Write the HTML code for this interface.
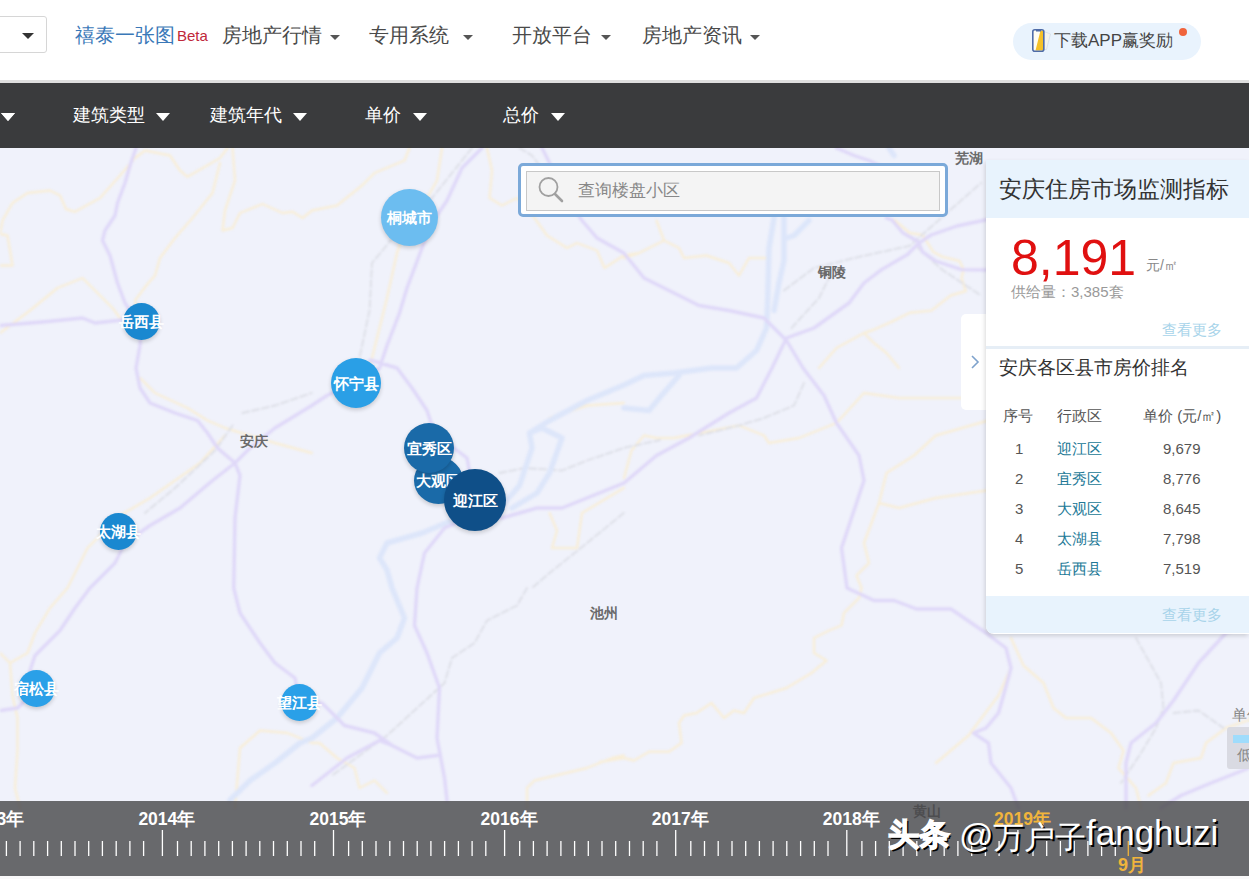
<!DOCTYPE html>
<html><head><meta charset="utf-8">
<style>
*{margin:0;padding:0;box-sizing:border-box}
html,body{width:1249px;height:879px;overflow:hidden;background:#f0f2fb;font-family:"Liberation Sans",sans-serif;position:relative}
.abs{position:absolute}
#header{position:absolute;left:0;top:0;width:1249px;height:83px;background:#fff;border-bottom:3px solid #dedede}
#map{position:absolute;left:0;top:83px;width:1249px;height:796px;background:#f0f2fb}
#bar{position:absolute;left:0;top:83px;width:1249px;height:65px;background:rgba(38,39,40,0.9)}
.nav{position:absolute;top:22px;font-size:20px;color:#4a4a4a;line-height:26px;white-space:nowrap}
.caret{position:absolute;width:0;height:0;border-left:5.5px solid transparent;border-right:5.5px solid transparent;border-top:5px solid #555}
.fbar{position:absolute;top:102px;font-size:18px;color:#fff;line-height:26px;white-space:nowrap}
.wcaret{position:absolute;top:113px;width:0;height:0;border-left:7px solid transparent;border-right:7px solid transparent;border-top:8px solid #fff}
.bub{position:absolute;border-radius:50%;box-shadow:0 2px 4px rgba(0,0,0,0.18);color:#fff;font-size:15px;font-weight:bold;line-height:15px;text-align:center;white-space:nowrap;display:flex;align-items:center;justify-content:center}
.lbl{position:absolute;font-family:"Liberation Serif",serif;font-size:14px;color:#666;white-space:nowrap;font-weight:bold}
#panel{position:absolute;left:986px;top:160px;width:263px;height:474px;background:#fff;border-bottom-left-radius:8px;box-shadow:-1px 2px 4px rgba(0,0,0,0.15);overflow:hidden}
#timeline{position:absolute;left:0;top:801px;width:1249px;height:75px;background:rgba(70,70,73,0.8)}
#bstrip{position:absolute;left:0;top:876px;width:1249px;height:3px;background:#f9f9fa}
.tk{position:absolute;width:1.5px;background:#fff}
.yr{position:absolute;top:8px;font-size:17.5px;font-weight:bold;color:#fff;line-height:20px;white-space:nowrap}
.wm{position:absolute;color:#fff;white-space:nowrap;line-height:36px;text-shadow:2px 2px 0 #000}
</style></head><body>
<div id="map"><!--ROADS--><svg width="1249" height="796" viewBox="0 83 1249 796" style="position:absolute;left:0;top:0;filter:blur(0.8px)" fill="none" stroke-linejoin="round" stroke-linecap="round">
<path d="M0,234 L2.5,220.5 L12.5,203 L27.5,193 L50,190.5 L60,195.5 L66,209 L75,211.8 L100,198 L120,175.5 L135,158 L145,150.5 L170,155.5 L180,170.5 L187.5,176.8 L205,166.8 L220,158 L227.5,148 M0,234 L7.5,235.5 L12.5,265.5 L0,265.5 M232.5,148 L235,180.5 L225,210.5 L222.5,230.5 L232.5,228 L240,213 L262.5,204 L282.5,213 L292.5,211.8 L302.5,218 L312,210.5 L337,205.5 L362,185.5 L374.5,173 L404.5,160.5 L409.5,148 M220,163 L212.5,193 L192.5,218 L175,238 L160,258 L155,275.5 L147.5,284 L135,300.5 L141,321 M0,333 L30,310.5 L57.5,288 L82.5,278 L97.5,293 L112.5,308 L120,318 M442,148 L437,180.5 L417,215.5 L409,217 L397,253 L387,298 L374.5,348 L369.5,368 M487,148 L492,170.5 L489.5,198 L502,205.5 L517,198 L534.5,218 L547,235.5 L567,248 L577,243 L597,250.5 L604.5,268 L623.75,255.5 L639,253 L664,240.5 L656.5,220.5 M624,258 L639,253 M664,240.5 L679,248 L684,258 L706.5,255.5 L729,263 L739,275.5 L749,258 L766.5,258 M819,368 L836.5,348 L864,333 L873,330 L892.4,321.4 L909.7,312.8 L931.3,310.6 L950.7,295.5 L965.8,291 L961.5,278 L963.7,269.6 L959.4,261 L942,256.6 L933.4,252 L922.6,235 L909.7,233 L894.5,220 M864,333 L874,343 L886.5,353 L899,368 M140,378 L155,393 L187.5,408 L207.5,420.5 L225,428 L275,443 L311.75,453 M225,435.5 L200,463 L150,498 L120,515.5 L87.5,548 L67.5,588 L50,608 L35,633 L27.5,653 L10,663 M0,653 L10,663 L12.5,695.5 L17.5,718 L17.5,750.5 L15,788 L20,808 M624,478 L631.5,450.5 L644,435.5 L656.5,438 L674,438 L739,425.5 L764,435.5 L769,443 L799,438 L836.5,423 L864,393 L899,398 L935.75,398 L990,398 M990,420 L935.75,435.5 L914,455.5 L886.5,473 L879,503 L864,543 L869,563 L856.5,575.5 L861.5,588 L859,598 L844,613 L841.5,625.5 L829,630.5 L814,638 L814,653 L826.5,660.5 L811.5,673 L786.5,688 L754,698 L744,713 L734,710.5 L724,718 L711.5,703 L696.5,713 L684,715.5 L679,723 L681.5,743 L669,751.75 L649,751.75 L634,760.5 L624,758 L600,762 M879,503 L899,508 L935.75,498 L990,490 M1011,638 L1023.5,665.5 L1043.5,683 L1053.5,708 L1066,718 L1091,718 L1111,733 L1123.5,750.5 L1118.5,768 L1136,788 L1141,808 M1249,720 L1226,728 L1206,743 L1201,758 L1173.5,763 L1166,783 L1148.5,795.5 M936,763 L968.5,735.5 L998.5,695.5 L1010,670 M235,808 L240,748 L260,730.5 L287.5,733 L312,743 L319.5,743 L337,758 L354.5,768 L359.5,788 L374.5,780.5 L387,793 M527,808 L527,788 L534.5,780.5 L587,768 L612,758 L623.75,755.5 M623.75,403 L587,405.5 L549.5,418 M549.5,513 L557,530.5 L552,548 L577,548 L582,513 L623.75,488" stroke="#f8eed8" stroke-width="2.4"/>
<path d="M472,148 L452,173 L432,198 L409,217 L384.5,248 L372,263 L369.5,310.5 L359.5,358 M519.5,148 L532,155.5 L539.5,165.5 M242.5,413 L275,405.5 L311.75,393 M232.5,425.5 L215,450.5 L175,488 L145,513 M499.5,473 L524.5,468 L562,470.5 L587,460.5 L623.75,448 L660,440 M784,290.5 L814,268 L860,256.6 L909.7,245.8 L946.4,213.4 L981,183 M918,248 L942,269.6 L981,295.5 M791.5,328 L819,298 L829,278 M804,383 L794,405.5 L764,418 L739,425.5 L699,435.5 M527,588 L517,605.5 L487,620.5 L474.5,643 L452,658 L444.5,683 L387,735.5 L332,775.5 M1136,638 L1161,683 L1163.5,708 L1156,728 L1141,753 L1121,783 M1173.5,713 L1198.5,710.5 L1223.5,728 M623.75,513 L587,543 L549.5,573 L532,588" stroke="#dcdee6" stroke-width="1.8" stroke-dasharray="7 3"/>
<path d="M230,800 L250,780.5 L275,763 L300,743 L312,738 L337,718 L362,688 L379.5,653 L397,638 L404.5,618 L392,588 L387,570 L379.5,558 L387,543 L422,533 L452,520.5 L475,515 L502,505.5 L519.5,485.5 L532,448 L529.5,433 L549.5,420.5 L587,400.5 L624,385 L644,375.5 L674,373 L711.5,368 L736.5,368 L756.5,350.5 L766.5,328 L767.75,298 L769,248 L774,218 M784,218 L784,260.5 L779,283 L774,310.5 M809,220.5 L794,235.5 L786.5,238 M529.5,433 L542,428 L562,438 L549.5,473 L537,493 L512,508 M624,408 L649,410.5 L661.5,395.5 L679,375.5 M889,148 L894,155.5" stroke="#dde6fa" stroke-width="5.5"/>
<path d="M136,148 L130,165.5 L125,183 L117.5,203 L115,215.5 L105,230.5 L102.5,240.5 L110,255.5 L117.5,283 L125,303 L135,318 L141,330 L140,345.5 L136,368 L140,388 L150,403 L175,413 L197.5,420.5 L207.5,433 L217.5,448 L235,463 L240,475.5 L235,518 L233.75,588 L240,613 L260,643 L275,663 L295,678 L300,703 L322,703 L344.5,725.5 L374.5,733 L392,745.5 L417,758 L437,755.5 M0,325.5 L45,321.8 L82.5,318 L95,323 L117.5,320.5 L135,318 M482,148 L462,168 L447,200.5 L432,223 L422,248 L407,288 L399.5,313 L387,345.5 L379.5,368 L360,382 M370,360 L397,368 L412,388 L427,410.5 L432,425.5 L450,445 L467,458 L475,500 M0,710.5 L17.5,708 L36,689 L30,670.5 L35,655.5 L60,630.5 L75,608 L90,588 L115,563 L125,543 L150,525.5 L180,508 L212.5,480.5 L235,463 L250,448 L275,428 L311.75,405.5 L327,395.5 L355,382 M542,148 L549.5,163 L565,195 L582,220.5 L597,238 L623.75,253 L644,278 L674,293 L699,305.5 L729,310.5 L764,318 L786.5,340.5 L803,368 L824,395.5 L836.5,423 L859,455.5 L864,480.5 L851.5,518 L841.5,548 L847,588 L874,600.5 L894,600.5 L916.5,609 L936,609 L951,609 L986,633 L1006,648 L1011,668 L1003.5,695.5 L998.5,713 L986,728 L973.5,733 L988.5,743 L991,763 L1011,788 L1018.5,808 M447,800.5 L444.5,778 L437,738 L439.5,688 L427,653 L414.5,625.5 L417,588 L424.5,553 L444.5,528 L475,515 L502,518 L537,508 L562,508 L587,498 L624,483 L656.5,455.5 L689,438 L729,413 L756.5,398 L772,368 L786.5,338 L814,328 L849,303 L864,283 L881.6,269.6 L907.5,254.5 L918,243.7 L931,235 L957,226 L990,219 M312,785.5 L347,758 L379.5,740.5 L392,745.5 M836.5,148 L854,155.5 L869,160.5 L900,175 M886.5,218 L892,220 L903,233 L918,241.5 L922.6,252 L935.6,261 L961.5,269.6 L990,270 M1249,625 L1226,633 L1198.5,663 L1173.5,700.5 L1156,723 L1131,743 L1126,763 L1126,808 M1249,768 L1211,783 L1181,795.5 L1161,808" stroke="#dfd8f8" stroke-width="3.4"/>
</svg>
<svg width="1249" height="796" viewBox="0 83 1249 796" style="position:absolute;left:0;top:0">
<text x="240" y="446" font-family="Liberation Serif" font-size="14" font-weight="bold" fill="#6a6a6a">安庆</text>
<text x="818" y="277" font-family="Liberation Serif" font-size="14" font-weight="bold" fill="#6a6a6a">铜陵</text>
<text x="589.5" y="618" font-family="Liberation Serif" font-size="14" font-weight="bold" fill="#6a6a6a">池州</text>
<text x="955" y="163" font-family="Liberation Serif" font-size="14" font-weight="bold" fill="#6a6a6a">芜湖</text>
<text x="913" y="816" font-family="Liberation Serif" font-size="14" font-weight="bold" fill="#6a6a6a">黄山</text>
</svg><!--/ROADS--></div>
<div id="header">
  <div class="abs" style="left:-6px;top:16px;width:53px;height:37px;border:1px solid #d6d6d6;border-radius:3px;background:#fff"></div>
  <div class="caret" style="left:22px;top:33px;border-left-width:6px;border-right-width:6px;border-top:6px solid #333"></div>
  <div class="nav" style="left:75px;color:#3a78b8">禧泰一张图</div>
  <div class="abs" style="left:177px;top:27px;font-size:15px;color:#c0283a">Beta</div>
  <div class="nav" style="left:222px">房地产行情</div><div class="caret" style="left:330px;top:35px"></div>
  <div class="nav" style="left:369px">专用系统</div><div class="caret" style="left:463px;top:35px"></div>
  <div class="nav" style="left:512px">开放平台</div><div class="caret" style="left:601px;top:35px"></div>
  <div class="nav" style="left:642px">房地产资讯</div><div class="caret" style="left:750px;top:35px"></div>
  <div class="abs" style="left:1013px;top:23px;width:188px;height:37px;border-radius:19px;background:#e9f3fd"></div>
  <svg class="abs" style="left:1030px;top:28px" width="24" height="26" viewBox="0 0 24 26"><path d="M14 3.5 L20.5 6 L16.5 21.5 L14 21.5 Z" fill="#f4f4ee" stroke="#d4dde8" stroke-width="0.8"/><rect x="2.8" y="1.8" width="11" height="21.5" rx="2" fill="#fffdf2"/><path d="M10.5 2.5 L13 2.5 L13 22.5 L5.5 22.5 Z" fill="#f5c128"/><rect x="2.8" y="1.8" width="11" height="21.5" rx="2" fill="none" stroke="#4f6ca8" stroke-width="1.6"/><rect x="6" y="2" width="5" height="1.5" fill="#4f6ca8"/></svg>
  <div class="abs" style="left:1054px;top:29px;font-size:17px;color:#444;line-height:24px">下载APP赢奖励</div>
  <div class="abs" style="left:1179px;top:28px;width:8px;height:8px;border-radius:50%;background:#f0643c"></div>
</div>
<div id="bar">
  <div class="wcaret" style="left:1px;top:30px"></div>
</div>
<div class="fbar" style="left:73px">建筑类型</div><div class="wcaret" style="left:156px"></div>
<div class="fbar" style="left:210px">建筑年代</div><div class="wcaret" style="left:293px"></div>
<div class="fbar" style="left:365px">单价</div><div class="wcaret" style="left:413px"></div>
<div class="fbar" style="left:503px">总价</div><div class="wcaret" style="left:551px"></div>
<div class="wcaret" style="left:1px"></div>

<!-- bubbles -->
<div class="bub" style="left:381px;top:189px;width:57px;height:57px;background:#6cbdf0">桐城市</div>
<div class="bub" style="left:123px;top:303px;width:37px;height:37px;background:#1a88d0">岳西县</div>
<div class="bub" style="left:331px;top:358px;width:50px;height:50px;background:#2a9fe6">怀宁县</div>
<div class="bub" style="left:414px;top:457px;width:49px;height:47px;background:#1a6aa8">大观区</div>
<div class="bub" style="left:404px;top:423px;width:50px;height:50px;background:#1a6aa8">宜秀区</div>
<div class="bub" style="left:444px;top:469px;width:62px;height:62px;background:#0f4f88">迎江区</div>
<div class="bub" style="left:100px;top:513px;width:37px;height:37px;background:#1a88d0">太湖县</div>
<div class="bub" style="left:18px;top:670px;width:37px;height:37px;background:#2aa0e8">宿松县</div>
<div class="bub" style="left:281px;top:684px;width:37px;height:37px;background:#2aa0e8">望江县</div>

<!-- search -->
<div class="abs" style="left:518px;top:163px;width:430px;height:54px;border:3px solid #7ba9d9;border-radius:5px;background:#fff"></div>
<div class="abs" style="left:526px;top:171px;width:414px;height:40px;border:1px solid #c8c8c8;background:#f4f4f4"></div>
<svg class="abs" style="left:536px;top:176px" width="30" height="30" viewBox="0 0 30 30"><circle cx="12.5" cy="11" r="9" fill="none" stroke="#a0a0a0" stroke-width="1.8"/><line x1="19" y1="18" x2="26" y2="25" stroke="#a0a0a0" stroke-width="2.6" stroke-linecap="round"/></svg>
<div class="abs" style="left:578px;top:178px;font-size:17.4px;color:#888;line-height:24px">查询楼盘小区</div>

<!-- panel -->
<div class="abs" style="left:961px;top:314px;width:30px;height:96px;background:#fff;border-radius:5px 0 0 5px"></div>
<svg class="abs" style="left:969px;top:353px" width="12" height="18" viewBox="0 0 12 18"><path d="M3 3 L9 9 L3 15" fill="none" stroke="#7ea2cc" stroke-width="1.6"/></svg>
<div id="panel">
  <div class="abs" style="left:0;top:0;width:263px;height:58px;background:#e8f3fd"></div>
  <div class="abs" style="left:13px;top:16px;font-size:22.5px;color:#333;line-height:28px;white-space:nowrap">安庆住房市场监测指标</div>
  <div class="abs" style="left:25px;top:68px;font-size:50px;color:#e01010;line-height:60px">8,191</div>
  <div class="abs" style="left:160px;top:97px;font-size:14px;color:#888">元/㎡</div>
  <div class="abs" style="left:25px;top:123px;font-size:15px;color:#999;white-space:nowrap">供给量：3,385套</div>
  <div class="abs" style="left:176px;top:161px;font-size:14.5px;color:#a8d4ea">查看更多</div>
  <div class="abs" style="left:0;top:186px;width:263px;height:3px;background:#e6eef6"></div>
  <div class="abs" style="left:13px;top:195px;font-size:19px;color:#333;white-space:nowrap">安庆各区县市房价排名</div>

  <div class="abs" style="left:17px;top:247px;font-size:15px;color:#555;white-space:nowrap">序号</div>
  <div class="abs" style="left:71px;top:247px;font-size:15px;color:#555;white-space:nowrap">行政区</div>
  <div class="abs" style="left:157px;top:247px;font-size:15px;color:#555;white-space:nowrap">单价 (元/㎡)</div>
  <div class="abs" style="left:29px;top:280px;font-size:15px;color:#555">1</div>
  <div class="abs" style="left:71px;top:280px;font-size:15px;color:#217896;white-space:nowrap">迎江区</div>
  <div class="abs" style="left:177px;top:280px;font-size:15px;color:#555">9,679</div>
  <div class="abs" style="left:29px;top:310px;font-size:15px;color:#555">2</div>
  <div class="abs" style="left:71px;top:310px;font-size:15px;color:#217896;white-space:nowrap">宜秀区</div>
  <div class="abs" style="left:177px;top:310px;font-size:15px;color:#555">8,776</div>
  <div class="abs" style="left:29px;top:340px;font-size:15px;color:#555">3</div>
  <div class="abs" style="left:71px;top:340px;font-size:15px;color:#217896;white-space:nowrap">大观区</div>
  <div class="abs" style="left:177px;top:340px;font-size:15px;color:#555">8,645</div>
  <div class="abs" style="left:29px;top:370px;font-size:15px;color:#555">4</div>
  <div class="abs" style="left:71px;top:370px;font-size:15px;color:#217896;white-space:nowrap">太湖县</div>
  <div class="abs" style="left:177px;top:370px;font-size:15px;color:#555">7,798</div>
  <div class="abs" style="left:29px;top:400px;font-size:15px;color:#555">5</div>
  <div class="abs" style="left:71px;top:400px;font-size:15px;color:#217896;white-space:nowrap">岳西县</div>
  <div class="abs" style="left:177px;top:400px;font-size:15px;color:#555">7,519</div>
  <div class="abs" style="left:0;top:436px;width:263px;height:37px;background:#e8f3fd"></div>
  <div class="abs" style="left:176px;top:446px;font-size:14.5px;color:#a8d4ea">查看更多</div>
</div>

<div class="abs" style="left:1232px;top:706px;font-size:15px;color:#888;line-height:18px;white-space:nowrap">单位</div>
<div class="abs" style="left:1227px;top:727px;width:30px;height:42px;background:#d9dae2;border-radius:3px 0 0 3px"></div>
<div class="abs" style="left:1233px;top:735px;width:20px;height:8px;background:#9fdcfc"></div>
<div class="abs" style="left:1237px;top:746px;font-size:15px;color:#888;line-height:18px">低</div>
<div id="timeline">
<svg width="1249" height="74" style="position:absolute;left:0;top:0" stroke="#fff" stroke-width="1.3"><line x1="-8.7" y1="29" x2="-8.7" y2="55"/><line x1="6.4" y1="40" x2="6.4" y2="55"/><line x1="20.1" y1="40" x2="20.1" y2="55"/><line x1="33.8" y1="40" x2="33.8" y2="55"/><line x1="47.6" y1="40" x2="47.6" y2="55"/><line x1="61.3" y1="40" x2="61.3" y2="55"/><line x1="75.0" y1="40" x2="75.0" y2="55"/><line x1="88.7" y1="40" x2="88.7" y2="55"/><line x1="102.4" y1="40" x2="102.4" y2="55"/><line x1="116.2" y1="40" x2="116.2" y2="55"/><line x1="129.9" y1="40" x2="129.9" y2="55"/><line x1="143.6" y1="40" x2="143.6" y2="55"/><line x1="162.4" y1="29" x2="162.4" y2="55"/><line x1="177.5" y1="40" x2="177.5" y2="55"/><line x1="191.2" y1="40" x2="191.2" y2="55"/><line x1="204.9" y1="40" x2="204.9" y2="55"/><line x1="218.7" y1="40" x2="218.7" y2="55"/><line x1="232.4" y1="40" x2="232.4" y2="55"/><line x1="246.1" y1="40" x2="246.1" y2="55"/><line x1="259.8" y1="40" x2="259.8" y2="55"/><line x1="273.5" y1="40" x2="273.5" y2="55"/><line x1="287.3" y1="40" x2="287.3" y2="55"/><line x1="301.0" y1="40" x2="301.0" y2="55"/><line x1="314.7" y1="40" x2="314.7" y2="55"/><line x1="333.5" y1="29" x2="333.5" y2="55"/><line x1="348.6" y1="40" x2="348.6" y2="55"/><line x1="362.3" y1="40" x2="362.3" y2="55"/><line x1="376.0" y1="40" x2="376.0" y2="55"/><line x1="389.8" y1="40" x2="389.8" y2="55"/><line x1="403.5" y1="40" x2="403.5" y2="55"/><line x1="417.2" y1="40" x2="417.2" y2="55"/><line x1="430.9" y1="40" x2="430.9" y2="55"/><line x1="444.6" y1="40" x2="444.6" y2="55"/><line x1="458.4" y1="40" x2="458.4" y2="55"/><line x1="472.1" y1="40" x2="472.1" y2="55"/><line x1="485.8" y1="40" x2="485.8" y2="55"/><line x1="504.6" y1="29" x2="504.6" y2="55"/><line x1="519.7" y1="40" x2="519.7" y2="55"/><line x1="533.4" y1="40" x2="533.4" y2="55"/><line x1="547.1" y1="40" x2="547.1" y2="55"/><line x1="560.9" y1="40" x2="560.9" y2="55"/><line x1="574.6" y1="40" x2="574.6" y2="55"/><line x1="588.3" y1="40" x2="588.3" y2="55"/><line x1="602.0" y1="40" x2="602.0" y2="55"/><line x1="615.7" y1="40" x2="615.7" y2="55"/><line x1="629.5" y1="40" x2="629.5" y2="55"/><line x1="643.2" y1="40" x2="643.2" y2="55"/><line x1="656.9" y1="40" x2="656.9" y2="55"/><line x1="675.7" y1="29" x2="675.7" y2="55"/><line x1="690.8" y1="40" x2="690.8" y2="55"/><line x1="704.5" y1="40" x2="704.5" y2="55"/><line x1="718.2" y1="40" x2="718.2" y2="55"/><line x1="732.0" y1="40" x2="732.0" y2="55"/><line x1="745.7" y1="40" x2="745.7" y2="55"/><line x1="759.4" y1="40" x2="759.4" y2="55"/><line x1="773.1" y1="40" x2="773.1" y2="55"/><line x1="786.8" y1="40" x2="786.8" y2="55"/><line x1="800.6" y1="40" x2="800.6" y2="55"/><line x1="814.3" y1="40" x2="814.3" y2="55"/><line x1="828.0" y1="40" x2="828.0" y2="55"/><line x1="846.8" y1="29" x2="846.8" y2="55"/><line x1="861.9" y1="40" x2="861.9" y2="55"/><line x1="875.6" y1="40" x2="875.6" y2="55"/><line x1="889.3" y1="40" x2="889.3" y2="55"/><line x1="903.1" y1="40" x2="903.1" y2="55"/><line x1="916.8" y1="40" x2="916.8" y2="55"/><line x1="930.5" y1="40" x2="930.5" y2="55"/><line x1="944.2" y1="40" x2="944.2" y2="55"/><line x1="957.9" y1="40" x2="957.9" y2="55"/><line x1="971.7" y1="40" x2="971.7" y2="55"/><line x1="985.4" y1="40" x2="985.4" y2="55"/><line x1="999.1" y1="40" x2="999.1" y2="55"/><line x1="1017.9" y1="29" x2="1017.9" y2="55"/><line x1="1033.0" y1="40" x2="1033.0" y2="55"/><line x1="1046.7" y1="40" x2="1046.7" y2="55"/><line x1="1060.4" y1="40" x2="1060.4" y2="55"/><line x1="1074.2" y1="40" x2="1074.2" y2="55"/><line x1="1087.9" y1="40" x2="1087.9" y2="55"/><line x1="1101.6" y1="40" x2="1101.6" y2="55"/><line x1="1115.3" y1="40" x2="1115.3" y2="55"/><line x1="1128.3" y1="40" x2="1128.3" y2="55" stroke="#f0b43c"/></svg>
<div class="yr" style="left:-32.7px">2013年</div>
<div class="yr" style="left:138.4px">2014年</div>
<div class="yr" style="left:309.5px">2015年</div>
<div class="yr" style="left:480.6px">2016年</div>
<div class="yr" style="left:651.7px">2017年</div>
<div class="yr" style="left:822.8px">2018年</div>
<div class="yr" style="left:994px;color:#f0b43c">2019年</div>
<div class="abs" style="left:1118px;top:55px;font-size:18px;font-weight:bold;color:#f0b43c;line-height:18px">9月</div>
</div>
</div>
<div class="wm" style="left:888px;top:817px;font-weight:900;font-size:31px;-webkit-text-stroke:1.3px #fff">头条</div>
<div class="wm" style="left:959px;top:817px;font-size:34px">@</div>
<div class="wm" style="left:993px;top:820px;font-size:30.7px;letter-spacing:0px">万户子</div>
<div class="wm" style="left:1086px;top:815px;font-size:35px">fanghuzi</div>

<div id="bstrip"></div>
</body></html>
